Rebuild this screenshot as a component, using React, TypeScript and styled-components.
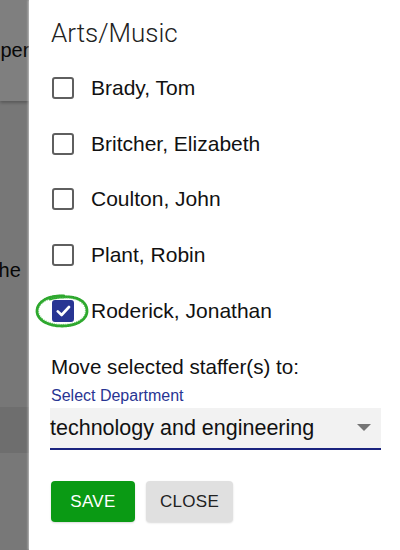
import React from "react";
import styled, { createGlobalStyle } from "styled-components";

const staff = [
  { name: "Brady, Tom", checked: false },
  { name: "Britcher, Elizabeth", checked: false },
  { name: "Coulton, John", checked: false },
  { name: "Plant, Robin", checked: false },
  { name: "Roderick, Jonathan", checked: true },
];

const App = () => {
  return (
    <Page>
      <GlobalStyle />
      <Behind>
        <BehindHeader>
          <BehindText $shift={-24}>Super</BehindText>
        </BehindHeader>
        <BehindBody>
          <BehindText $shift={-7}>the</BehindText>
        </BehindBody>
        <BehindBand />
        <BehindRest />
      </Behind>
      <Backdrop />
      <Drawer>
        <Title>Arts/Music</Title>
        <List>
          {staff.map((s) => (
            <Row key={s.name}>
              <BoxWrap>
                <Box $checked={s.checked}>
                  {s.checked && (
                    <svg width="15" height="12" viewBox="0 0 15 12">
                      <path
                        d="M1.8 6.4 L5.6 10 L13 2"
                        fill="none"
                        stroke="#fff"
                        strokeWidth="2.6"
                        strokeLinecap="round"
                        strokeLinejoin="round"
                      />
                    </svg>
                  )}
                </Box>
                {s.checked && (
                  <Scribble width="56" height="36" viewBox="0 0 56 36">
                    <path
                      d="M30 3 C14 2 3 9 3 18 C3 27 14 33 28 33 C42 33 53 27 53 18 C53 9 44 3 30 4 C24 4 19 5 16 6"
                      fill="none"
                      stroke="#2ea82e"
                      strokeWidth="2.8"
                      strokeDasharray="1.6 0.7"
                      strokeLinecap="round"
                    />
                    <path
                      d="M29 4.5 C15 3.5 4.5 10 4.5 18 C4.5 26 15 31.5 28 31.5 C41 31.5 51.5 26 51.5 18 C51.5 10 43 4.5 29 4.5"
                      fill="none"
                      stroke="#4cbc4c"
                      strokeWidth="1.2"
                      strokeDasharray="0.8 1.4"
                      opacity="0.8"
                    />
                  </Scribble>
                )}
              </BoxWrap>
              <Name>{s.name}</Name>
            </Row>
          ))}
        </List>
        <MoveLabel>Move selected staffer(s) to:</MoveLabel>
        <FieldLabel>Select Department</FieldLabel>
        <SelectBox>
          <SelectValue>technology and engineering</SelectValue>
          <svg width="14" height="8" viewBox="0 0 14 8">
            <path d="M0 0 L14 0 L7 7 Z" fill="#757575" />
          </svg>
        </SelectBox>
        <Actions>
          <Button $primary>SAVE</Button>
          <Button>CLOSE</Button>
        </Actions>
      </Drawer>
    </Page>
  );
};

export default App;

const GlobalStyle = createGlobalStyle`
  html, body {
    margin: 0;
    padding: 0;
    background: #fff;
  }
  body {
    font-family: "Liberation Sans", Arial, sans-serif;
  }
`;

const Page = styled.div`
  position: relative;
  width: 400px;
  height: 550px;
  overflow: hidden;
`;

const Behind = styled.div`
  display: flex;
  flex-direction: column;
  width: 29px;
  height: 100%;
  overflow: hidden;
  background: #efefef;
`;

const BehindHeader = styled.div`
  height: 101px;
  flex-shrink: 0;
  display: flex;
  align-items: center;
  background: #fefefe;
  box-shadow: 0 2px 3px rgba(0, 0, 0, 0.25);
  position: relative;
`;

const BehindBody = styled.div`
  height: 306px;
  flex-shrink: 0;
  display: flex;
  align-items: center;
  padding-top: 32px;
  box-sizing: border-box;
`;

const BehindBand = styled.div`
  height: 46px;
  flex-shrink: 0;
  background: #dcdcdc;
`;

const BehindRest = styled.div`
  flex: 1;
  background: #f0f0f0;
`;

const BehindText = styled.span<{ $shift: number }>`
  margin-left: ${(p) => p.$shift}px;
  font-size: 20px;
  color: #111;
  white-space: nowrap;
`;

const Backdrop = styled.div`
  position: absolute;
  inset: 0;
  background: rgba(0, 0, 0, 0.5);
`;

const Drawer = styled.div`
  position: absolute;
  top: 0;
  right: 0;
  bottom: 0;
  left: 29px;
  background: #fff;
  box-shadow: -1px 0 2px rgba(255, 255, 255, 0.5);
  padding: 17px 19px 0 22px;
  box-sizing: border-box;
  display: flex;
  flex-direction: column;
`;

const Title = styled.h2`
  margin: 0;
  font-family: Roboto, "Liberation Sans", sans-serif;
  font-weight: 300;
  font-size: 26px;
  line-height: 32px;
  color: #222;
`;

const List = styled.div`
  display: flex;
  flex-direction: column;
  margin-top: 11px;
`;

const Row = styled.label`
  display: flex;
  align-items: center;
  height: 55.7px;
  gap: 17px;
`;

const BoxWrap = styled.span`
  position: relative;
  display: flex;
  margin-left: 1px;
`;

const Box = styled.span<{ $checked?: boolean }>`
  width: 22px;
  height: 22px;
  box-sizing: border-box;
  border-radius: 3px;
  border: 2px solid ${(p) => (p.$checked ? "#283593" : "#5f5f5f")};
  background: ${(p) => (p.$checked ? "#283593" : "#fff")};
  display: flex;
  align-items: center;
  justify-content: center;
`;

const Scribble = styled.svg`
  position: absolute;
  left: -18px;
  top: -7px;
  pointer-events: none;
`;

const Name = styled.span`
  font-size: 21px;
  color: #111;
`;

const MoveLabel = styled.div`
  margin-top: 17px;
  font-size: 20.6px;
  color: #111;
`;

const FieldLabel = styled.div`
  margin-top: 8px;
  font-size: 16px;
  color: #283593;
`;

const SelectBox = styled.div`
  margin-top: 3px;
  height: 42px;
  background: #f2f2f2;
  border-bottom: 2px solid #1a237e;
  box-sizing: border-box;
  display: flex;
  align-items: center;
  justify-content: space-between;
  padding: 0 10px 0 0;
  margin-left: -1px;
`;

const SelectValue = styled.span`
  font-size: 21.5px;
  color: #111;
`;

const Actions = styled.div`
  display: flex;
  gap: 11px;
  margin-top: 31px;
`;

const Button = styled.button<{ $primary?: boolean }>`
  width: ${(p) => (p.$primary ? "84px" : "87px")};
  height: 41px;
  padding: 0;
  border: none;
  border-radius: 4px;
  font-family: "Liberation Sans", Arial, sans-serif;
  font-size: 17px;
  letter-spacing: 0.3px;
  background: ${(p) => (p.$primary ? "#0a9a14" : "#e0e0e0")};
  color: ${(p) => (p.$primary ? "#fff" : "#222")};
  box-shadow: 0 1px 2px rgba(0, 0, 0, 0.15);
`;
